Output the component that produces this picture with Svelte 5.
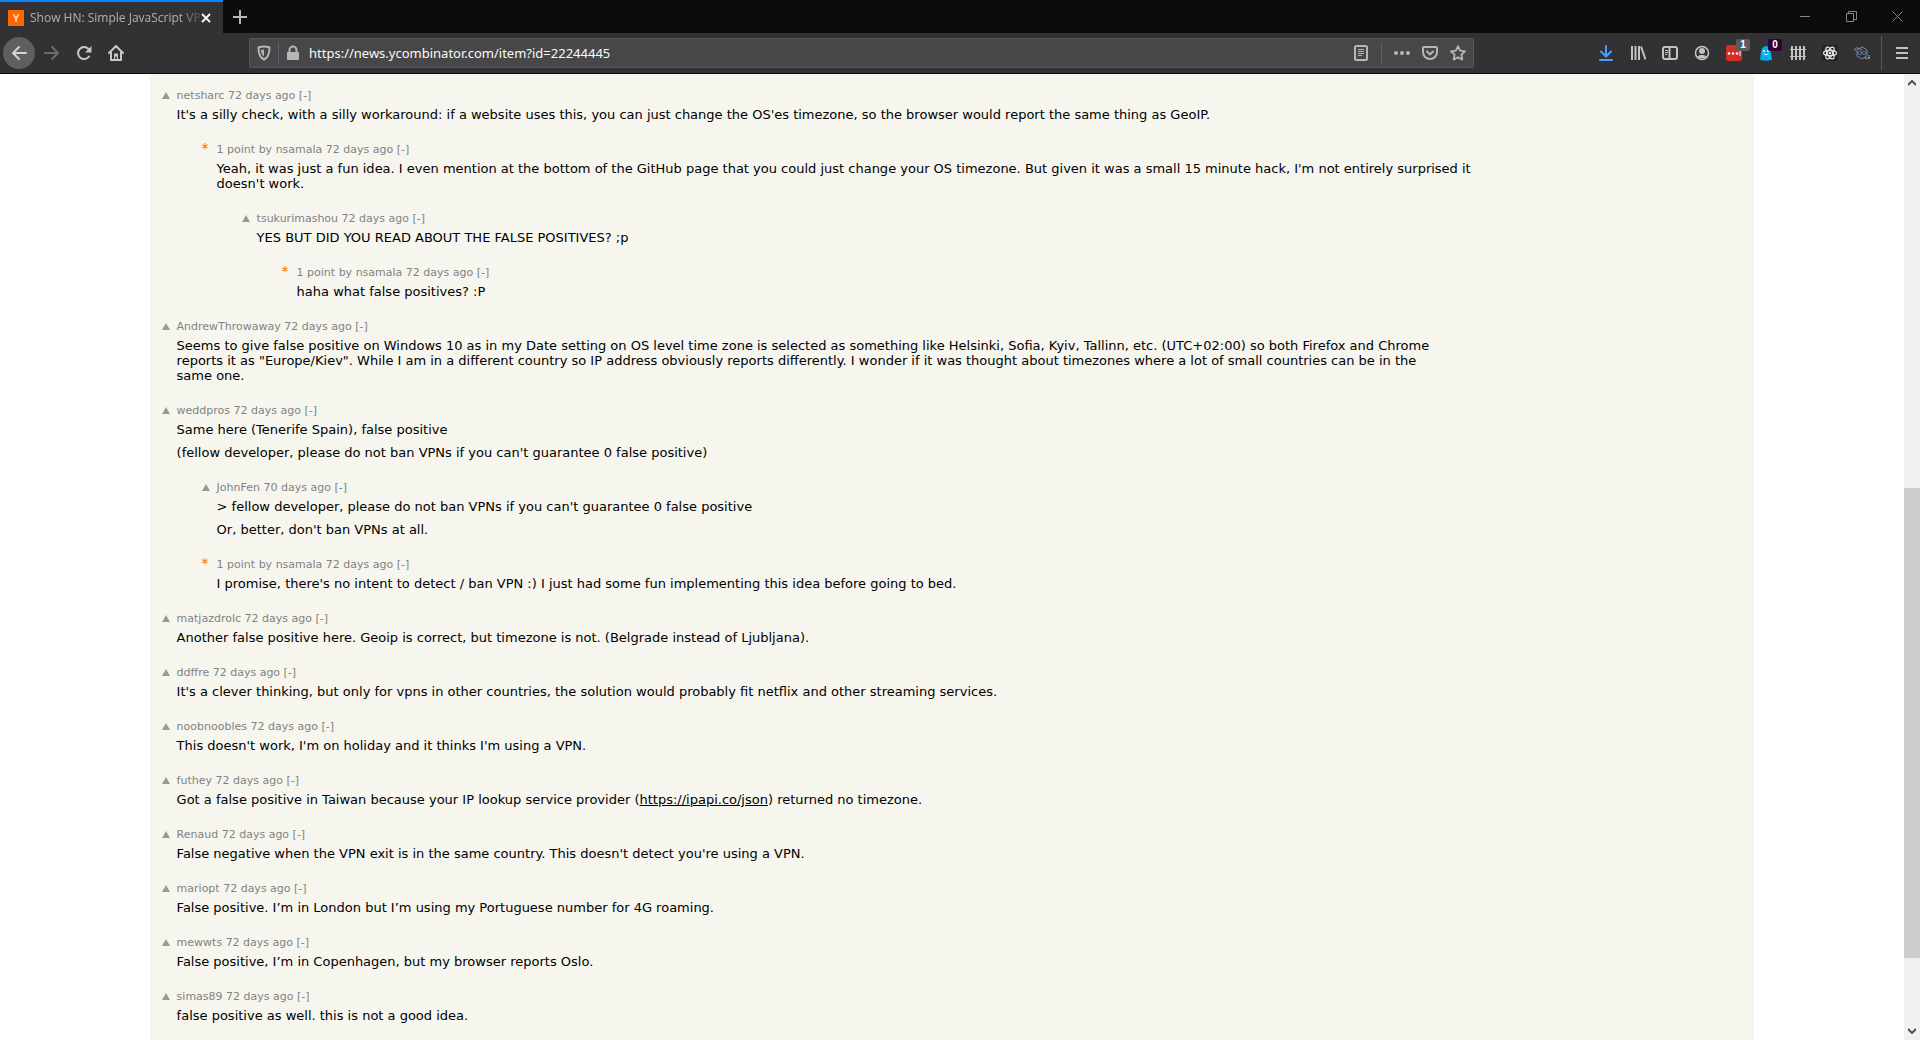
<script lang="ts">
    type Comment = {user: string, age: string, level: number, own?: boolean, text: string[], link?: string, rest?: string};
    let address:string = 'https://news.ycombinator.com/item?id=22244445';
    let comments: Comment[] = [
        {user: "netsharc", age: "72 days ago", level: 0, text: ["It's a silly check, with a silly workaround: if a website uses this, you can just change the OS'es timezone, so the browser would report the same thing as GeoIP."]},
        {user: "nsamala", age: "72 days ago", level: 1, own: true, text: ["Yeah, it was just a fun idea. I even mention at the bottom of the GitHub page that you could just change your OS timezone. But given it was a small 15 minute hack, I'm not entirely surprised it doesn't work."]},
        {user: "tsukurimashou", age: "72 days ago", level: 2, text: ["YES BUT DID YOU READ ABOUT THE FALSE POSITIVES? ;p"]},
        {user: "nsamala", age: "72 days ago", level: 3, own: true, text: ["haha what false positives? :P"]},
        {user: "AndrewThrowaway", age: "72 days ago", level: 0, text: ["Seems to give false positive on Windows 10 as in my Date setting on OS level time zone is selected as something like Helsinki, Sofia, Kyiv, Tallinn, etc. (UTC+02:00) so both Firefox and Chrome reports it as \"Europe/Kiev\". While I am in a different country so IP address obviously reports differently. I wonder if it was thought about timezones where a lot of small countries can be in the same one."]},
        {user: "weddpros", age: "72 days ago", level: 0, text: ["Same here (Tenerife Spain), false positive", "(fellow developer, please do not ban VPNs if you can't guarantee 0 false positive)"]},
        {user: "JohnFen", age: "70 days ago", level: 1, text: ["> fellow developer, please do not ban VPNs if you can't guarantee 0 false positive", "Or, better, don't ban VPNs at all."]},
        {user: "nsamala", age: "72 days ago", level: 1, own: true, text: ["I promise, there's no intent to detect / ban VPN :) I just had some fun implementing this idea before going to bed."]},
        {user: "matjazdrolc", age: "72 days ago", level: 0, text: ["Another false positive here. Geoip is correct, but timezone is not. (Belgrade instead of Ljubljana)."]},
        {user: "ddffre", age: "72 days ago", level: 0, text: ["It's a clever thinking, but only for vpns in other countries, the solution would probably fit netflix and other streaming services."]},
        {user: "noobnoobles", age: "72 days ago", level: 0, text: ["This doesn't work, I'm on holiday and it thinks I'm using a VPN."]},
        {user: "futhey", age: "72 days ago", level: 0, text: ["Got a false positive in Taiwan because your IP lookup service provider ("], link: "https://ipapi.co/json", rest: ") returned no timezone."},
        {user: "Renaud", age: "72 days ago", level: 0, text: ["False negative when the VPN exit is in the same country. This doesn't detect you're using a VPN."]},
        {user: "mariopt", age: "72 days ago", level: 0, text: ["False positive. I’m in London but I’m using my Portuguese number for 4G roaming."]},
        {user: "mewwts", age: "72 days ago", level: 0, text: ["False positive, I’m in Copenhagen, but my browser reports Oslo."]},
        {user: "simas89", age: "72 days ago", level: 0, text: ["false positive as well. this is not a good idea."]},
    ];
</script>

<div class="window">
    <header>
        <div class="tabs">
            <div class="tab">
                <span class="favicon">Y</span>
                <span class="title">Show HN: Simple JavaScript VP</span>
                <button class="close" aria-label="Close tab">
                    <svg width="10" height="10" viewBox="0 0 10 10"><path d="M1 1l8 8M9 1l-8 8" stroke="#f9f9fa" stroke-width="2"/></svg>
                </button>
            </div>
            <button class="new" aria-label="New tab">
                <svg width="14" height="14" viewBox="0 0 14 14"><path d="M7 0v14M0 7h14" stroke="#b8b8b9" stroke-width="2"/></svg>
            </button>
            <div class="controls">
                <button aria-label="Minimize"><svg width="11" height="11" viewBox="0 0 11 11"><path d="M0 5.5h10" stroke="#858585"/></svg></button>
                <button aria-label="Restore"><svg width="11" height="11" viewBox="0 0 11 11"><path d="M.5 2.5h7v8h-7zM2.500 2.500v-2h8v8h-2.500" fill="none" stroke="#858585"/></svg></button>
                <button aria-label="Close"><svg width="11" height="11" viewBox="0 0 11 11"><path d="M.5.5l10 10M10.500.5l-10 10" stroke="#858585"/></svg></button>
            </div>
        </div>
        <div class="toolbar">
            <button class="back" aria-label="Back">
                <svg width="16" height="16" viewBox="0 0 16 16"><path d="M15 8H2M8 2L2 8l6 6" fill="none" stroke="#d4d4d6" stroke-width="2" stroke-linecap="round" stroke-linejoin="round"/></svg>
            </button>
            <div class="nav">
                <button aria-label="Forward" disabled>
                    <svg width="16" height="16" viewBox="0 0 16 16"><path d="M1 8h13M8 2l6 6-6 6" fill="none" stroke="#6c6c6e" stroke-width="2" stroke-linecap="round" stroke-linejoin="round"/></svg>
                </button>
                <button aria-label="Reload">
                    <svg width="16" height="16" viewBox="0 0 16 16"><path d="M13 11.500A6 6 0 1 1 12.500 4" fill="none" stroke="#c8c8ca" stroke-width="2" stroke-linecap="round"/><path d="M15.500 1v6.500H9z" fill="#c8c8ca"/></svg>
                </button>
                <button aria-label="Home">
                    <svg width="16" height="16" viewBox="0 0 16 16"><path d="M1 8l7-7 7 7M3 7v8h10V7" fill="none" stroke="#c8c8ca" stroke-width="2" stroke-linecap="round" stroke-linejoin="round"/><path d="M6 14V8.500h4V14H8.800v-2.500H7.200V14z" fill="#c8c8ca"/></svg>
                </button>
            </div>
            <div class="urlbar">
                <svg width="16" height="16" viewBox="0 0 16 16"><path d="M8 1.500c2 0 4 .5 5.500 1C13.500 8 12.500 12.500 8 14.500 3.500 12.500 2.500 8 2.500 2.500 4 2 6 1.500 8 1.500z" fill="none" stroke="#b6b6b8" stroke-width="2"/><path d="M8 4.500v7C5.500 9.500 5 7.500 5 5z" fill="#b6b6b8"/></svg>
                <span class="line"></span>
                <svg width="16" height="16" viewBox="0 0 16 16"><path d="M4.500 8V5a3.500 3.500 0 0 1 7 0v3" fill="none" stroke="#b6b6b8" stroke-width="2"/><rect x="2" y="7" width="12" height="8" rx="1" fill="#b6b6b8"/></svg>
                <input type="text" aria-label="Address" bind:value={address}>
                <button aria-label="Reader view"><svg width="16" height="16" viewBox="0 0 16 16"><rect x="2" y="1" width="12" height="14" rx="1.500" fill="none" stroke="#b6b6b8" stroke-width="2"/><path d="M5 4.500h6M5 6.500h6M5 8.500h6M5 10.500h4" stroke="#b6b6b8"/></svg></button>
                <span class="line"></span>
                <div class="actions">
                    <button aria-label="Page actions"><svg width="16" height="16" viewBox="0 0 16 16" fill="#b6b6b8"><circle cx="2" cy="8" r="2"/><circle cx="8" cy="8" r="2"/><circle cx="14" cy="8" r="2"/></svg></button>
                    <button aria-label="Pocket"><svg width="16" height="16" viewBox="0 0 16 16"><path d="M2 2h12a1 1 0 0 1 1 1v4a7 7 0 0 1-14 0V3a1 1 0 0 1 1-1zM5 6.500l3 3 3-3" fill="none" stroke="#b6b6b8" stroke-width="2" stroke-linecap="round" stroke-linejoin="round"/></svg></button>
                    <button aria-label="Bookmark"><svg width="16" height="16" viewBox="0 0 16 16"><path d="M8 1.200l2.100 4.500 4.900.6-3.600 3.400.9 4.900L8 12.200l-4.300 2.400.9-4.900L1 6.300l4.900-.6z" fill="none" stroke="#b6b6b8" stroke-width="1.800" stroke-linejoin="round"/></svg></button>
                </div>
            </div>
            <div class="tools">
                <button aria-label="Downloads"><svg width="16" height="16" viewBox="0 0 16 16"><path d="M8 1v10M3 6.500l5 5 5-5M2 15h12" fill="none" stroke="#45a1ff" stroke-width="2" stroke-linecap="round" stroke-linejoin="round"/></svg></button>
                <button aria-label="Library"><svg width="16" height="16" viewBox="0 0 16 16"><path d="M2 1v14M5.500 1v14M9 1v14M11 1.500l4.500 13" stroke="#c3c3c5" stroke-width="2"/></svg></button>
                <button aria-label="Sidebars"><svg width="16" height="16" viewBox="0 0 16 16"><rect x="1" y="2" width="14" height="12" rx="2" fill="none" stroke="#c3c3c5" stroke-width="2"/><path d="M7.500 2v12" stroke="#c3c3c5" stroke-width="2"/><path d="M3 5.500h3M3 7.500h3M3 9.500h2" stroke="#c3c3c5"/></svg></button>
                <button aria-label="Account"><svg width="16" height="16" viewBox="0 0 16 16"><circle cx="8" cy="8" r="6.500" fill="none" stroke="#c3c3c5" stroke-width="1.500"/><circle cx="8" cy="6" r="3" fill="#c3c3c5"/><path d="M3.500 11.500c1-2 8-2 9 0-2 2.500-7 2.500-9 0z" fill="#c3c3c5"/></svg></button>
                <button aria-label="Passwords"><svg width="16" height="16" viewBox="0 0 16 16"><rect width="16" height="16" rx="2" fill="#d32d27"/><circle cx="3" cy="8.500" r="1.300" fill="#fff"/><circle cx="7" cy="8.500" r="1.300" fill="#fff"/><circle cx="11" cy="8.500" r="1.300" fill="#fff"/><path d="M14 6v5" stroke="#fff"/></svg><span class="badge">1</span></button>
                <button aria-label="Trackers"><svg width="16" height="16" viewBox="0 0 16 16"><path d="M2 14c1-2 0-13 6-13s5 11 6 13c-.5 1.500-1.500 1.500-2.500.5-.5 2-2 2-2.500.5-.5 1.300-1.500 1.300-2 0-.5 1.500-2 1.500-2.500-.5-1 1-2 1-2.500-.5z" fill="#00aef0"/><circle cx="6" cy="6" r="1" fill="#fff"/><circle cx="10" cy="6" r="1" fill="#fff"/><path d="M5.500 8.500c1 1.500 4 1.500 5 0" fill="none" stroke="#fff"/></svg><span class="badge purple">0</span></button>
                <button aria-label="Fence"><svg width="16" height="16" viewBox="0 0 16 16"><path d="M2 1v14M6 1v14M10 1v14M14 1v14" stroke="#c3c3c5" stroke-width="2"/><path d="M0 4.500h16M0 11.500h16" stroke="#c3c3c5"/></svg></button>
                <button aria-label="React"><svg width="16" height="16" viewBox="0 0 16 16"><rect width="16" height="16" fill="#252527"/><g fill="none" stroke="#e4e4e4" stroke-width="1.200"><ellipse cx="8" cy="8" rx="6.500" ry="2.700"/><ellipse cx="8" cy="8" rx="6.500" ry="2.700" transform="rotate(60 8 8)"/><ellipse cx="8" cy="8" rx="6.500" ry="2.700" transform="rotate(120 8 8)"/></g><circle cx="8" cy="8" r="1.300" fill="#e4e4e4"/></svg></button>
                <button aria-label="Extension"><svg width="16" height="16" viewBox="0 0 16 16"><path d="M8 2l5 3v6l-5 3-5-3V5z" fill="none" stroke="#7d8ba0"/><path d="M1 6C-.5 3 3 1.500 8 5M15 10c1.500 3-2 4.500-5 2.500" fill="none" stroke="#8d99ab"/><circle cx="6" cy="8" r="1.700" fill="none" stroke="#4f76a8"/><circle cx="10" cy="8" r="1.700" fill="none" stroke="#4f76a8"/><circle cx="15" cy="13" r="1" fill="#8d99ab"/></svg></button>
            </div>
            <button class="menu" aria-label="Menu"><svg width="12" height="14" viewBox="0 0 12 14"><path d="M0 2h12M0 7h12M0 12h12" stroke="#c3c3c5" stroke-width="2"/></svg></button>
        </div>
    </header>
    <div class="page">
        <div class="body">
            <main>
                {#each comments as comment}
                    <article style="--level:{comment.level}">
                        {#if comment.own}
                            <span class="star">*</span>
                        {:else}
                            <button class="vote" aria-label="Upvote"><svg width="8" height="7" viewBox="0 0 8 7"><path d="M4 0l4 7H0z" fill="#999"/></svg></button>
                        {/if}
                        <div>
                            <div class="head">{comment.own ? '1 point by ' : ''}<a href="#user">{comment.user}</a> <a href="#item">{comment.age}</a> <a href="#toggle">[-]</a></div>
                            <div class="comment">
                                {#each comment.text as text}
                                    <p>{text}{#if comment.link}<a href={comment.link}>{comment.link}</a>{comment.rest}{/if}</p>
                                {/each}
                            </div>
                        </div>
                    </article>
                {/each}
            </main>
        </div>
        <div class="scrollbar">
            <svg width="8" height="6" viewBox="0 0 8 6"><path d="M0 5l4-4 4 4" fill="none" stroke="#505050" stroke-width="2"/></svg>
            <div class="track"><div class="thumb"></div></div>
            <svg width="8" height="6" viewBox="0 0 8 6"><path d="M0 1l4 4 4-4" fill="none" stroke="#505050" stroke-width="2"/></svg>
        </div>
    </div>
</div>

<style>
    .window {
        height: 100vh;
        display: flex;
        flex-direction: column;
        overflow: hidden;
        background: #fff;
        font-family: "Noto Sans", sans-serif;
        font-size: 13px;
    }
    button {
        background: none;
        border: none;
        padding: 0;
        display: flex;
        align-items: center;
        justify-content: center;
    }
    svg {
        display: block;
        flex: none;
    }
    .tabs {
        display: flex;
        height: 33px;
        background: #0c0c0d;
    }
    .tab {
        display: flex;
        align-items: center;
        width: 223px;
        box-sizing: border-box;
        padding: 0 12px 0 8px;
        background: #323234;
        border-top: 2px solid #0a84ff;
    }
    .favicon {
        width: 16px;
        line-height: 16px;
        background: #ff6600;
        color: #fff;
        text-align: center;
        font-size: 11px;
    }
    .title {
        flex: 1;
        margin-left: 6px;
        white-space: nowrap;
        color: #b1b1b3;
        font-family: "Open Sans", sans-serif;
        font-size: 12px;
        mask-image: linear-gradient(to right, #000 150px, transparent 175px);
    }
    .new {
        width: 34px;
    }
    .controls {
        display: flex;
        margin-left: auto;
    }
    .controls button {
        width: 46px;
    }
    .toolbar {
        display: flex;
        align-items: center;
        height: 40px;
        background: #323234;
        border-bottom: 1px solid #0c0c0d;
    }
    .back {
        width: 32px;
        height: 32px;
        margin-left: 3px;
        border-radius: 50%;
        background: #5f5f61;
    }
    .nav {
        display: flex;
        margin-left: 1px;
    }
    .nav button {
        width: 32px;
        height: 32px;
    }
    .urlbar {
        display: flex;
        align-items: center;
        flex: 1;
        height: 28px;
        margin-left: 117px;
        padding: 0 1px 0 6px;
        gap: 6px;
        background: #474749;
        border: 1px solid #58585a;
        border-radius: 2px;
    }
    .line {
        width: 1px;
        height: 22px;
        background: #5f5f6b;
    }
    .urlbar input {
        flex: 1;
        padding: 0;
        margin-left: 2px;
        border: none;
        outline: none;
        background: none;
        color: #f9f9fa;
        font: inherit;
    }
    .urlbar button {
        width: 28px;
    }
    .actions {
        display: flex;
    }
    .tools {
        display: flex;
        margin-left: 116px;
    }
    .tools button {
        position: relative;
        width: 32px;
        height: 32px;
    }
    .badge {
        position: absolute;
        top: 2px;
        right: 0;
        width: 14px;
        line-height: 12px;
        border-radius: 2px;
        background: #5a5a5c;
        color: #fff;
        font-family: "Liberation Sans", sans-serif;
        font-size: 10px;
        font-weight: bold;
    }
    .purple {
        background: #330033;
    }
    .menu {
        width: 39px;
        height: 34px;
        margin-left: 3px;
        padding-left: 2px;
        border-left: 1px solid #5a5a5c;
    }
    .page {
        display: flex;
        flex: 1;
        min-height: 0;
    }
    .body {
        flex: 1;
        padding: 0 8px;
        overflow: hidden;
    }
    main {
        width: 85%;
        min-height: 100%;
        margin: 0 auto;
        padding: 14px 0 0 12px;
        box-sizing: border-box;
        background: #f6f6ef;
        color: #000;
        font-family: Verdana, "DejaVu Sans", sans-serif;
        line-height: 15px;
    }
    article {
        display: flex;
        padding-left: calc(var(--level) * 40px);
        margin-bottom: 20px;
    }
    .vote, .star {
        width: 8px;
        flex: none;
        margin-right: 7px;
    }
    .vote {
        height: 7px;
        margin-top: 4px;
    }
    .star {
        color: #ff6600;
        font-size: 14px;
        line-height: 13px;
    }
    .head {
        color: #828282;
        font-size: 11px;
    }
    .head a {
        color: inherit;
        text-decoration: none;
    }
    .comment {
        max-width: 1265px;
        margin-top: 4px;
    }
    p {
        margin: 0;
    }
    p + p {
        margin-top: 8px;
    }
    p a {
        color: #000;
    }
    .scrollbar {
        display: flex;
        flex-direction: column;
        align-items: center;
        width: 16px;
        padding: 6px 0;
        box-sizing: border-box;
        background: #f0f0f0;
    }
    .track {
        flex: 1;
        width: 100%;
        padding: 402px 0 0;
        box-sizing: border-box;
    }
    .thumb {
        height: 87%;
        background: #cdcdcd;
    }
</style>
